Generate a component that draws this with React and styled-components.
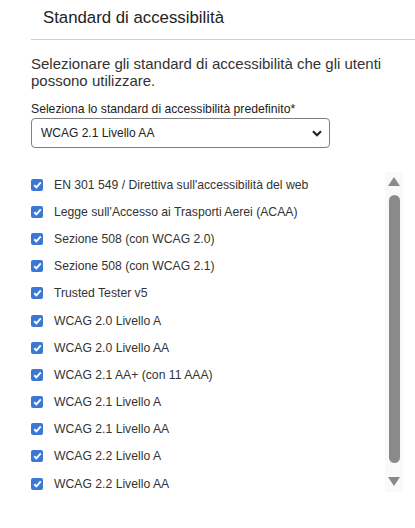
import React from "react";
import styled, { createGlobalStyle } from "styled-components";

const standards = [
  "EN 301 549 / Direttiva sull'accessibilità del web",
  "Legge sull'Accesso ai Trasporti Aerei (ACAA)",
  "Sezione 508 (con WCAG 2.0)",
  "Sezione 508 (con WCAG 2.1)",
  "Trusted Tester v5",
  "WCAG 2.0 Livello A",
  "WCAG 2.0 Livello AA",
  "WCAG 2.1 AA+ (con 11 AAA)",
  "WCAG 2.1 Livello A",
  "WCAG 2.1 Livello AA",
  "WCAG 2.2 Livello A",
  "WCAG 2.2 Livello AA",
];

const App = () => {
  return (
    <Panel>
      <GlobalStyle />
      <Header>
        <Title>Standard di accessibilità</Title>
      </Header>
      <Body>
        <Description>
          Selezionare gli standard di accessibilità che gli utenti possono
          utilizzare.
        </Description>
        <Label>
          <span>Seleziona lo standard di accessibilità predefinito*</span>
          <SelectBox>
            <span>WCAG 2.1 Livello AA</span>
            <svg width="10" height="7" viewBox="0 0 10 7">
              <path
                d="M1 1.2 L5 5.2 L9 1.2"
                fill="none"
                stroke="#222"
                strokeWidth="2.2"
              />
            </svg>
          </SelectBox>
        </Label>
        <ListArea>
          <List>
            {standards.map((s) => (
              <Row key={s}>
                <Check>
                  <svg width="9" height="8" viewBox="0 0 9 8">
                    <path
                      d="M1.2 4.2 L3.4 6.3 L7.8 1.4"
                      fill="none"
                      stroke="#fff"
                      strokeWidth="1.9"
                    />
                  </svg>
                </Check>
                <span>{s}</span>
              </Row>
            ))}
          </List>
          <Scrollbar>
            <Arrow />
            <Thumb />
            <Arrow down />
          </Scrollbar>
        </ListArea>
      </Body>
    </Panel>
  );
};

export default App;

const GlobalStyle = createGlobalStyle`
  body {
    margin: 0;
    background: #fff;
    font-family: "Liberation Sans", Arial, sans-serif;
    color: #333;
  }
`;

const Panel = styled.div`
  width: 415px;
  height: 528px;
  overflow: hidden;
`;

const Header = styled.div`
  margin-left: 31px;
  padding: 8px 0 0 12px;
  height: 31px;
  border-bottom: 1px solid #cfcfcf;
`;

const Title = styled.h2`
  margin: 0;
  font-size: 16.8px;
  font-weight: normal;
  color: #222;
  line-height: 20px;
`;

const Body = styled.div`
  padding: 15px 12px 0 31px;
`;

const Description = styled.p`
  margin: 0;
  font-size: 15px;
  line-height: 17px;
  color: #333;
`;

const Label = styled.label`
  display: flex;
  flex-direction: column;
  margin-top: 13px;
  span {
    font-size: 12.2px;
    line-height: 15px;
    color: #222;
  }
`;

const SelectBox = styled.div`
  width: 299px;
  height: 30px;
  box-sizing: border-box;
  margin-top: 1px;
  border: 1px solid #808080;
  border-radius: 4px;
  display: flex;
  align-items: center;
  justify-content: space-between;
  padding: 0 7px 0 9px;
  span {
    font-size: 12px;
    color: #222;
  }
`;

const ListArea = styled.div`
  display: flex;
  justify-content: space-between;
  margin-top: 23px;
`;

const List = styled.div`
  display: flex;
  flex-direction: column;
`;

const Row = styled.div`
  display: flex;
  align-items: center;
  gap: 11px;
  height: 27.2px;
  font-size: 12.2px;
  color: #333;
`;

const Check = styled.span`
  width: 12px;
  height: 12px;
  border-radius: 2px;
  background: #3b78d6;
  display: flex;
  align-items: center;
  justify-content: center;
`;

const Scrollbar = styled.div`
  width: 18px;
  height: 320px;
  margin-top: 1px;
  background: #f9f9f9;
  display: flex;
  flex-direction: column;
  align-items: center;
  padding: 5px 0 6px;
  box-sizing: border-box;
`;

const Arrow = styled.div`
  width: 0;
  height: 0;
  border-left: 6px solid transparent;
  border-right: 6px solid transparent;
  ${(p) =>
    p.down
      ? "border-top: 9px solid #8a8a8a;"
      : "border-bottom: 9px solid #8a8a8a; margin-bottom: 9px;"}
`;

const Thumb = styled.div`
  flex: 1;
  width: 11px;
  margin-bottom: 14px;
  border-radius: 6px;
  background: #8a8a8a;
`;
